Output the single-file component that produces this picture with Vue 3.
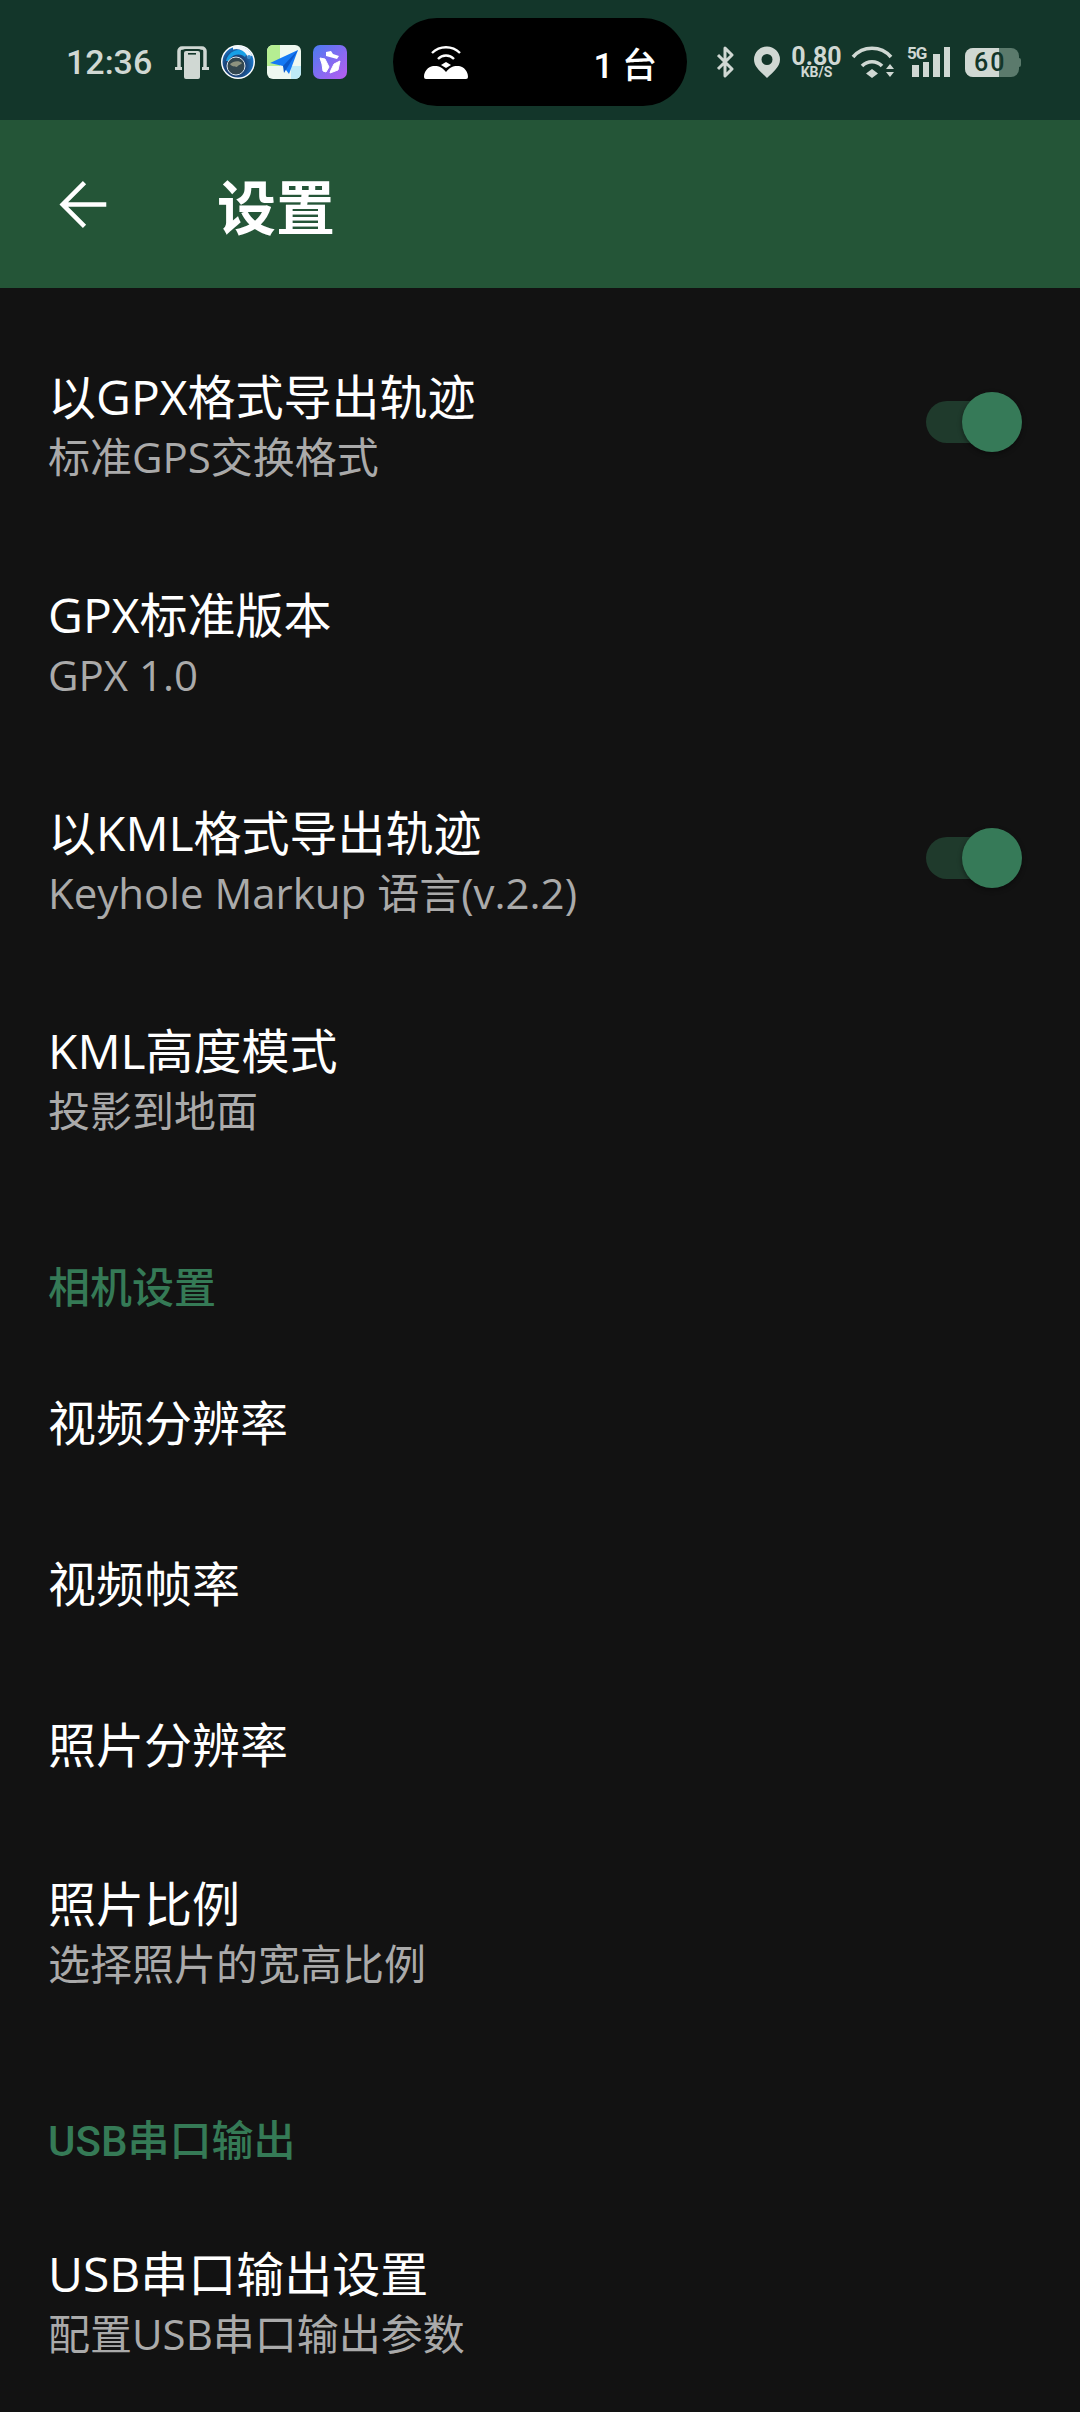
<template>
  <div class="page">
    <div class="status-bar">
      <span class="clock">12:36</span>
      <div class="notify-icons">
        <svg class="ic-mirror" viewBox="0 0 34 33" width="34" height="33">
          <path d="M4 22V5a3 3 0 0 1 3-3h20a3 3 0 0 1 3 3v17" fill="none" stroke="#d0d8d3" stroke-width="3.500" />
          <rect x="0" y="21" width="34" height="3" fill="#d0d8d3" />
          <rect x="8" y="4" width="18" height="30" rx="3" fill="#d0d8d3" stroke="#13362a" stroke-width="2" />
          <rect x="13" y="7" width="8" height="1.600" fill="#13362a" />
        </svg>
        <svg viewBox="0 0 34 34" width="34" height="34">
          <defs>
            <radialGradient id="orb" cx="0.42" cy="0.62" r="0.6">
              <stop offset="0" stop-color="#76846f" />
              <stop offset="0.42" stop-color="#1c3560" />
              <stop offset="1" stop-color="#1a78cc" />
            </radialGradient>
          </defs>
          <circle cx="17" cy="17" r="17" fill="#fff" />
          <circle cx="17" cy="17" r="15.500" fill="url(#orb)" />
          <path d="M5 16a13 13 0 0 1 21-8l-2 4a10 10 0 0 0-16 4z" fill="#17a0e6" />
          <path d="M12 1.500a16 16 0 0 1 19 9l-4 3a12 12 0 0 0-15-9z" fill="#f2f8fc" />
          <circle cx="15" cy="21" r="9" fill="#33474f" stroke="#dfeaf2" stroke-width="1" />
          <path d="M9 19c3-3 9-4 12-1-1 2-3 1-5 4-3-1-5 0-7-3z" fill="#8d927f" />
          <circle cx="28" cy="12" r="2" fill="#3a8ccc" />
        </svg>
        <svg viewBox="0 0 34 34" width="34" height="34">
          <rect width="34" height="34" rx="6" fill="#eef8f0" />
          <path d="M0 6a6 6 0 0 1 6-6h7v21H0z" fill="#b5ee92" />
          <path d="M24 21h10v7a6 6 0 0 1-6 6h-4z" fill="#bdeaf7" />
          <path d="M3 18L31 5 22 29 16 21z" fill="#1479f5" />
          <path d="M16 21L31 5 17 28z" fill="#0a58c9" />
        </svg>
        <svg viewBox="0 0 34 34" width="34" height="34">
          <defs>
            <linearGradient id="star" x1="0" y1="0" x2="1" y2="1">
              <stop offset="0" stop-color="#4a7bf2" />
              <stop offset="1" stop-color="#b95cf0" />
            </linearGradient>
          </defs>
          <rect width="34" height="34" rx="7" fill="url(#star)" />
          <path d="M13 7l5-1 2 3 6 2-2 3-11-3z" fill="#fff" />
          <path d="M7 13l5 1 4 8-3 5-3-1-1-7z" fill="#fff" stroke="#fff" stroke-linejoin="round" />
          <path d="M27 16l-2 9-8 3 1-3 3-6z" fill="#fff" stroke="#fff" stroke-linejoin="round" />
        </svg>
      </div>
      <div class="island">
        <svg viewBox="0 0 44 34" width="44" height="34">
          <path d="M8 8a20 20 0 0 1 28 0" fill="none" stroke="#fff" stroke-width="2.400" />
          <path d="M14 14a11 11 0 0 1 16 0" fill="none" stroke="#fff" stroke-width="2.400" />
          <path d="M22 17l5 3-5 3-5-3z" fill="#fff" />
          <path d="M2 34a2 2 0 0 1-2-2c0-6 4-10 9-11 5 0 8 0 13 6 5-6 8-6 13-6 5 1 9 5 9 11a2 2 0 0 1-2 2z" fill="#fff" />
        </svg>
        <span class="island-text">1 台</span>
      </div>
      <div class="system-icons">
        <svg class="ic-bt" viewBox="0 0 18 32" width="18" height="32">
          <path d="M2 9l14 14-7 7V2l7 7L2 23" fill="none" stroke="#d0d8d3" stroke-width="3" stroke-linejoin="round" />
        </svg>
        <svg class="ic-loc" viewBox="0 0 28 32" width="28" height="32">
          <path fill-rule="evenodd" d="M14 32C8 26 1 21 1 13.500a13 13 0 0 1 26 0C27 21 20 26 14 32zM14 19a5.500 5.500 0 1 0 0-11 5.500 5.500 0 0 0 0 11z" fill="#d0d8d3" />
        </svg>
        <div class="speed">
          <span class="speed-num">0.80</span>
          <span class="speed-unit">KB/S</span>
        </div>
        <svg class="ic-wifi" viewBox="0 0 44 32" width="44" height="32">
          <path d="M2 11a25 25 0 0 1 38 0" fill="none" stroke="#d0d8d3" stroke-width="3.600" />
          <path d="M11 20a14 14 0 0 1 20 0" fill="none" stroke="#d0d8d3" stroke-width="3.600" />
          <path d="M21 23l6 4.500-6 4.500-6-4.500z" fill="#d0d8d3" />
          <path d="M39 18l4 5h-8zM39 31l4-5h-8z" fill="#d0d8d3" />
        </svg>
        <div class="signal">
          <span class="five-g">5G</span>
          <div class="bars">
            <i class="bar b1"></i>
            <i class="bar b2"></i>
            <i class="bar b3"></i>
            <i class="bar b4"></i>
          </div>
        </div>
        <div class="battery">
          <div class="battery-fill"></div>
          <span class="battery-num">60</span>
          <i class="battery-cap"></i>
        </div>
      </div>
    </div>

    <div class="app-bar">
      <svg class="back" viewBox="0 0 48 48" width="55" height="55">
        <path d="M43 24H5M24 5L5 24l19 19" fill="none" stroke="#fff" stroke-width="4" />
      </svg>
      <h1 class="title">设置</h1>
    </div>

    <div class="list">
      <template v-for="item in items" :key="item.title">
        <div v-if="item.section" class="section">{{ item.title }}</div>
        <div v-else class="row" :class="{ 'row-sub': item.sub }">
          <div class="row-text">
            <div class="row-title">{{ item.title }}</div>
            <div v-if="item.sub" class="row-desc">{{ item.sub }}</div>
          </div>
          <div v-if="item.toggle" class="switch">
            <i class="thumb"></i>
          </div>
        </div>
      </template>
    </div>
  </div>
</template>

<script setup>
const items = [
  { title: '以GPX格式导出轨迹', sub: '标准GPS交换格式', toggle: true },
  { title: 'GPX标准版本', sub: 'GPX 1.0' },
  { title: '以KML格式导出轨迹', sub: 'Keyhole Markup 语言(v.2.2)', toggle: true },
  { title: 'KML高度模式', sub: '投影到地面' },
  { title: '相机设置', section: true },
  { title: '视频分辨率' },
  { title: '视频帧率' },
  { title: '照片分辨率' },
  { title: '照片比例', sub: '选择照片的宽高比例' },
  { title: 'USB串口输出', section: true },
  { title: 'USB串口输出设置', sub: '配置USB串口输出参数' }
]
</script>

<style>
html,
body {
  margin: 0;
  background: #121212;
}
</style>

<style scoped>
.page {
  width: 1080px;
  height: 2412px;
  overflow: hidden;
  background: #121212;
  font-family: "Open Sans", "Noto Sans CJK SC", sans-serif;
}

.status-bar {
  height: 120px;
  background: #13362a;
  display: flex;
  align-items: center;
  box-sizing: border-box;
  padding: 4px 0 0 66px;
  color: #d0d8d3;
}

.clock {
  width: 109px;
  font-family: Roboto, sans-serif;
  font-size: 34px;
  font-weight: 500;
}

.notify-icons {
  display: flex;
  align-items: center;
  gap: 12px;
  width: 218px;
}

.ic-mirror {
  margin-top: 1px;
}

.island {
  width: 294px;
  height: 88px;
  border-radius: 44px;
  background: #000;
  display: flex;
  align-items: center;
  justify-content: space-between;
  box-sizing: border-box;
  padding: 0 30px 0 31px;
}

.island-text {
  color: #fff;
  font-family: Roboto, "Noto Sans CJK SC", sans-serif;
  font-size: 35px;
  font-weight: 500;
}

.system-icons {
  display: flex;
  align-items: center;
  margin-left: 29px;
}

.ic-loc {
  margin-left: 19px;
}

.speed {
  display: flex;
  flex-direction: column;
  align-items: center;
  font-family: Roboto, sans-serif;
  font-weight: 500;
  line-height: 1;
  width: 51px;
  margin-left: 10px;
}

.speed-num {
  font-size: 25px;
  height: 19px;
  line-height: 19px;
  font-weight: 700;
}

.speed-unit {
  font-size: 14px;
  line-height: 12px;
  font-weight: 700;
}

.ic-wifi {
  margin-left: 9px;
}

.signal {
  position: relative;
  width: 43px;
  height: 30px;
  margin-left: 12px;
}

.five-g {
  position: absolute;
  left: 0;
  top: -2px;
  font-family: Roboto, sans-serif;
  font-size: 17px;
  line-height: 17px;
  font-weight: 700;
  letter-spacing: -1px;
}

.bars {
  position: absolute;
  right: 0;
  bottom: 0;
  display: flex;
  align-items: flex-end;
  gap: 4px;
}

.bar {
  display: block;
  width: 6.500px;
  background: #d0d8d3;
}

.b1 { height: 12px; }
.b2 { height: 15px; }
.b3 { height: 23px; }
.b4 { height: 30px; }

.battery {
  position: relative;
  width: 54px;
  height: 29px;
  border-radius: 8px;
  background: #5b7a6c;
  margin-left: 15px;
}

.battery-fill {
  position: absolute;
  left: 0;
  top: 0;
  bottom: 0;
  width: 34px;
  border-radius: 8px 0 0 8px;
  background: #d0d8d3;
}

.battery-num {
  position: absolute;
  left: 9px;
  top: 0;
  font-family: Roboto, sans-serif;
  font-size: 25px;
  line-height: 29px;
  letter-spacing: 2px;
  color: #13362a;
  font-weight: 500;
}

.battery-cap {
  position: absolute;
  right: -2px;
  top: 10px;
  width: 2px;
  height: 9px;
  border-radius: 0 2px 2px 0;
  background: #5b7a6c;
}

.app-bar {
  height: 168px;
  background: #245537;
  display: flex;
  align-items: center;
}

.back {
  margin-left: 57px;
}

.title {
  margin: 0 0 0 105px;
  font-size: 59px;
  font-weight: 700;
  color: #fff;
}

.list {
  display: flex;
  flex-direction: column;
  padding-top: 30px;
}

.row {
  height: 161px;
  display: flex;
  align-items: center;
  justify-content: space-between;
  padding: 0 24px 0 48px;
}

.row-sub {
  height: 218px;
}

.row-title {
  color: #fff;
  font-size: 48px;
  line-height: 60px;
}

.row-desc {
  color: #aaa;
  font-size: 42px;
  line-height: 60px;
}

.section {
  height: 152px;
  box-sizing: border-box;
  padding: 45px 48px 0;
  line-height: 107px;
  font-family: Roboto, "Noto Sans CJK SC", sans-serif;
  color: #357a56;
  font-size: 42px;
  font-weight: 500;
}

.switch {
  position: relative;
  width: 80px;
  height: 42px;
  margin: 0 50px 10px 0;
  border-radius: 21px;
  background: #1f3a2c;
}

.thumb {
  position: absolute;
  right: -16px;
  top: -9px;
  width: 60px;
  height: 60px;
  border-radius: 50%;
  background: #367a58;
  box-shadow: 0 2px 5px rgba(0, 0, 0, 0.4);
}
</style>
